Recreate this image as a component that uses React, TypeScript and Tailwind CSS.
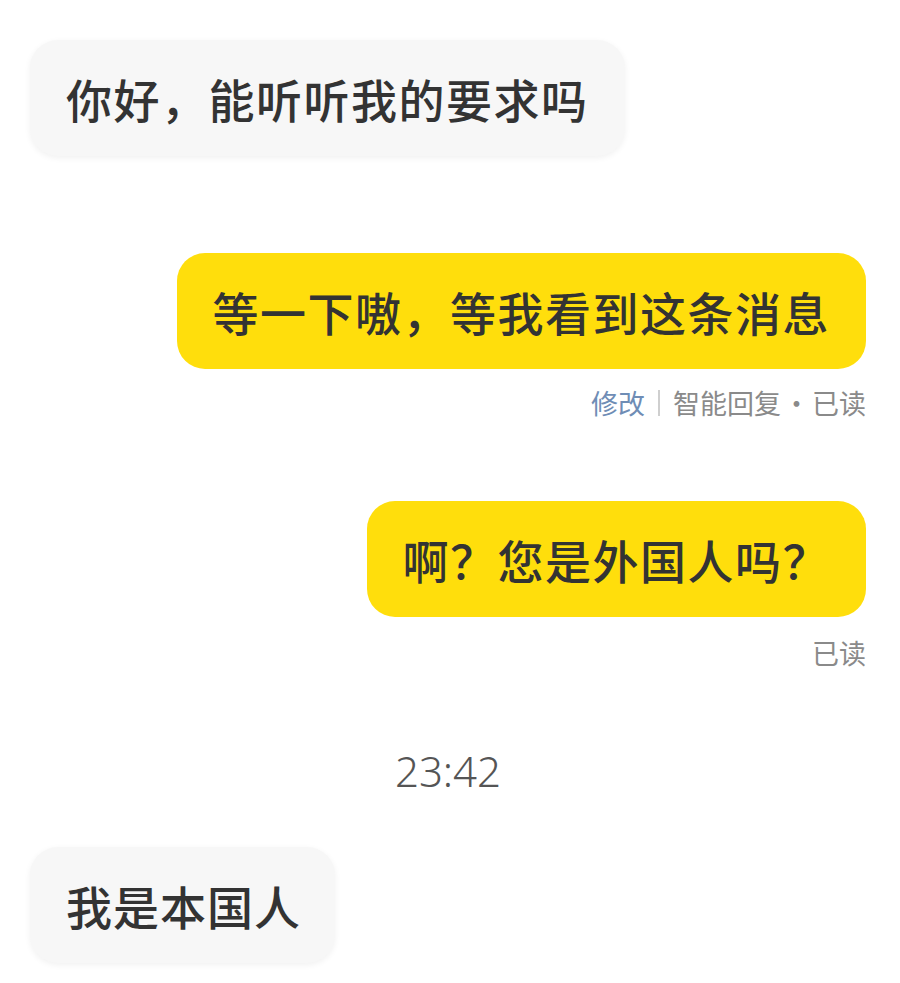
import React from "react";

const font = { fontFamily: '"Noto Sans CJK SC", "Noto Sans", sans-serif' };

function Left({ text }: { text: string }) {
  return (
    <div className="flex">
      <div className="h-[116px] flex items-center pl-[36px] pr-[36px] rounded-[28px] bg-[#f7f7f7] shadow-[0_2px_6px_rgba(0,0,0,0.06)] text-[46px] font-medium text-[#333333] tracking-[1.5px]">
        {text}
      </div>
    </div>
  );
}

function Right({ text }: { text: string }) {
  return (
    <div className="flex justify-end">
      <div className="h-[116px] flex items-center pl-[36px] pr-[36px] rounded-[28px] bg-[#ffde0c] text-[46px] font-medium text-[#333333] tracking-[1.5px]">
        {text}
      </div>
    </div>
  );
}

export default function App() {
  return (
    <div style={font} className="w-[900px] h-[983px] bg-white pl-[30px] pr-[34px] pt-[40px] overflow-hidden">
      <Left text="你好，能听听我的要求吗" />
      <div className="h-[97px]" />
      <Right text="等一下嗷，等我看到这条消息" />
      <div className="flex justify-end items-center mt-[16px] h-[36px] text-[27px] text-[#8a8a8a]">
        <span className="text-[#6f8db5]">修改</span>
        <span className="mx-[13px] w-[2px] h-[26px] bg-[#cfcfcf]" />
        <span>智能回复</span>
        <span className="mx-[2px]">·</span>
        <span>已读</span>
      </div>
      <div className="h-[80px]" />
      <Right text="啊？您是外国人吗？" />
      <div className="flex justify-end items-center mt-[18px] h-[36px] text-[27px] text-[#8a8a8a]">
        <span>已读</span>
      </div>
      <div className="flex justify-center mt-[72px]">
        <span className="text-[42px] text-[#555555] font-light leading-[56px]" style={{ fontFamily: '"Noto Sans", sans-serif' }}>23:42</span>
      </div>
      <div className="h-[48px]" />
      <div className="flex">
        <div className="h-[116px] flex items-center pl-[36px] pr-[34px] rounded-[28px] bg-[#f7f7f7] shadow-[0_2px_6px_rgba(0,0,0,0.06)] text-[46px] font-medium text-[#333333] tracking-[1px]">
          我是本国人
        </div>
      </div>
    </div>
  );
}
